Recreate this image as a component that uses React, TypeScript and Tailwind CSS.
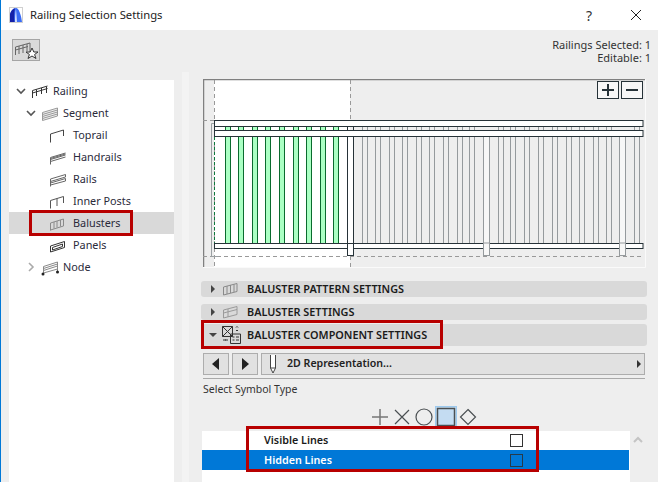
import React from 'react';

const font = { fontFamily: '"Noto Sans", sans-serif' };

const greenBars = [225, 238, 252, 265, 279, 293, 306, 320, 333];
const grayBars = [362, 375, 389, 402, 416, 429, 443, 457, 469, 498, 510, 524, 538, 552, 566, 579, 593, 606, 634];
const posts = [484, 620];

const RailingIcon = ({ kind }: { kind: string }) => (
    <svg width="20" height="20" viewBox="0 0 20 20" fill="none" stroke="#555b5e" strokeWidth="1">
        {kind === 'railing' && <path d="M3.500 17V9.500L18.500 5M3.500 12L18.500 7.500M7.500 15V8.500M12.500 13V7M17.500 12V5.500" stroke="#333" />}
        {kind === 'segment' && <path d="M3.500 9.500L18.500 5V13L3.500 17.500ZM3.500 11.500L18.500 7M3.500 13.500L18.500 9M3.500 15.500L18.500 11" stroke="#999" fill="#eee" />}
        {kind === 'toprail' && <path d="M3.500 17.500V9L16.500 5V11" stroke="#444" />}
        {kind === 'handrails' && <path d="M3.500 17.500V10.500L18.500 6M3.500 12.500L18.500 8M3.500 14.500L18.500 10M3.500 11.500L18.500 7" stroke="#666" />}
        {kind === 'rails' && <path d="M3.500 17.500V10L18.500 5.500V8L3.500 12.500M3.500 14L18.500 9.500V12L3.500 16" stroke="#666" />}
        {kind === 'posts' && <path d="M3.500 17.500V9.500L16.500 5.500V12M10 7.500V15" stroke="#555" />}
        {kind === 'balusters' && <path d="M3.500 17.500V10L16.500 6V13L3.500 17M7 9V15.500M10 8V14.500M13.500 7V13.500" stroke="#8a8a8a" />}
        {kind === 'panels' && <path d="M3.500 17V11L17.500 6.500V12.500ZM5.500 15V12.500L15.500 9V11.500Z" stroke="#333" />}
        {kind === 'node' && (
            <g>
                <path d="M4.500 16V9.500L18.500 5V12L4.500 16M4.500 11.500L18.500 7M4.500 13.500L18.500 9M18.500 12V14" stroke="#888" />
                <circle cx="4" cy="17" r="1.500" fill="#222" stroke="none" />
                <circle cx="18.500" cy="15" r="1.500" fill="#222" stroke="none" />
            </g>
        )}
    </svg>
);

const Chevron = ({ open }: { open: boolean }) => (
    <svg width="10" height="10" viewBox="0 0 10 10" fill="none" stroke={open ? '#555' : '#aaa'} strokeWidth="1.6">
        {open ? <path d="M1 3L5 7L9 3" /> : <path d="M3 1L7 5L3 9" />}
    </svg>
);

const treeRows = [
    { label: 'Railing', kind: 'railing', indent: 'pl-[7px]', chevron: 'open' },
    { label: 'Segment', kind: 'segment', indent: 'pl-[17px]', chevron: 'open' },
    { label: 'Toprail', kind: 'toprail', indent: 'pl-[38px]' },
    { label: 'Handrails', kind: 'handrails', indent: 'pl-[38px]' },
    { label: 'Rails', kind: 'rails', indent: 'pl-[38px]' },
    { label: 'Inner Posts', kind: 'posts', indent: 'pl-[38px]' },
    { label: 'Balusters', kind: 'balusters', indent: 'pl-[38px]', selected: true },
    { label: 'Panels', kind: 'panels', indent: 'pl-[38px]' },
    { label: 'Node', kind: 'node', indent: 'pl-[17px]', chevron: 'closed' },
];

const Railing2D = () => (
    <svg width="443" height="189" viewBox="203 79 443 189" className="block">
        <rect x="203" y="79" width="443" height="189" fill="#eeeeee" />
        <rect x="214" y="80" width="136" height="187" fill="#ffffff" />
        <path d="M203 79.500H645.500V267.500H203" fill="none" stroke="#fafafa" />
        <path d="M645 79.500H204M203.500 79V267" fill="none" stroke="#808080" strokeWidth="1.500" />
        <path d="M214.500 80V267M350.500 80V121M350.500 256V267M203 120.500H214M203 256.500H642" stroke="#999" strokeDasharray="4 3" />
        <path d="M218.500 256.500H211.500V123.500H214" fill="none" stroke="#9aa0a3" />
        <path d="M214.500 137V243" stroke="#0d7a3c" strokeDasharray="3 2" />
        {grayBars.map((x) => (
            <path key={x} d={`M${x + 0.5} 126V243M${x + 5.5} 126V243`} stroke="#959a9d" />
        ))}
        {posts.map((x) => (
            <rect key={x} x={x - 0.500} y="136.500" width="6" height="119" fill="#f7f7f7" stroke="#959a9d" />
        ))}
        {greenBars.map((x) => (
            <rect key={x} x={x + 0.500} y="126.500" width="5" height="117" fill="#aaffc3" stroke="#0a6b2e" />
        ))}
        <rect x="347.500" y="136.500" width="6" height="119" fill="#ffffff" stroke="#263238" />
        <path d="M347.500 127V130M353.500 127V130" stroke="#263238" />
        <path d="M214.500 127V130" stroke="#263238" />
        <rect x="214.500" y="120.500" width="428.500" height="6" fill="#ffffff" stroke="#263238" />
        <rect x="214.500" y="130.500" width="428.500" height="6" fill="#ffffff" stroke="#263238" />
        <rect x="214.500" y="243.500" width="428.500" height="5" fill="#ffffff" stroke="#263238" />
        {posts.map((x) => (
            <rect key={x} x={x - 0.500} y="243" width="6" height="12.500" fill="#f7f7f7" stroke="#959a9d" />
        ))}
        <rect x="347.500" y="243.500" width="6" height="12" fill="#ffffff" stroke="#263238" />
    </svg>
);

const AccordionRow = ({ icon, label, open }: { icon: React.ReactNode; label: string; open?: boolean }) => (
    <div className={`flex items-center bg-[#d9d9d9] rounded-[3px] ${open ? 'h-[22px]' : 'h-[16px]'}`}>
        <span className="w-[21px] flex justify-center pl-[2px]">
            <svg width="8" height="8" viewBox="0 0 8 8" fill="#444">
                {open ? <path d="M0 2H8L4 6Z" /> : <path d="M2 0L6 4L2 8Z" />}
            </svg>
        </span>
        <span className="w-[25px] flex items-center">{icon}</span>
        <span className="text-[10.850px] font-semibold text-[#1b1b1b] whitespace-nowrap">{label}</span>
    </div>
);

const SymbolIcon = ({ children, selected }: { children: React.ReactNode; selected?: boolean }) => (
    <span className={`w-[22px] h-[22px] flex items-center justify-center ${selected ? 'bg-[#c4dcf2] border border-[#9cc9ee]' : ''}`}>
        <svg width="20" height="20" viewBox="0 0 20 20" fill="none" stroke="#4a4f52" strokeWidth="1.200">{children}</svg>
    </span>
);

export default function App() {
    return (
        <div className="w-[658px] h-[482px] overflow-hidden flex flex-col bg-[#eeeeee] border-l border-[#0078d7] text-[#1b1b1b]" style={font}>
            <header className="h-[30px] bg-white flex items-center shrink-0">
                <svg width="14" height="16" viewBox="0 0 14 16" className="ml-[8px]">
                    <rect x="0.500" y="0.500" width="13" height="15" fill="#ffffff" stroke="#d0d0d0" />
                    <path d="M1 15V7C2 4 4 1 7 1C10 1 12 8 13 15Z" fill="#3a6cf5" />
                    <path d="M1 15V7C2 4 3.500 2 6 1.200C5 6 5 11 5.500 15Z" fill="#1420a8" />
                    <path d="M6 15C6 9 6.500 4 7 2C7.300 6 7.800 11 8 15Z" fill="#cfdcff" />
                </svg>
                <span className="ml-[7px] text-[11.250px] text-[#222]">Railing Selection Settings</span>
                <span className="ml-auto mr-[38px] text-[14px] text-[#333]">?</span>
                <svg width="12" height="12" viewBox="0 0 12 12" className="mr-[16px]" fill="none" stroke="#222">
                    <path d="M1 1L11 11M11 1L1 11" />
                </svg>
            </header>

            <div className="h-[49px] shrink-0 flex items-start justify-between">
                <div className="ml-[11px] mt-[9px] w-[28px] h-[22px] bg-[#d9d9d9] border border-[#a5a5a5] flex items-center justify-center">
                    <svg width="26" height="20" viewBox="0 0 26 20" fill="none">
                        <path d="M2.500 15V7L17 3V12M6 6V14M10 5V13M14 4V11M2.500 10L15 6.500" stroke="#666" />
                        <path d="M19 8L20.800 12H25L21.600 14.500L23 18.500L19 16L15 18.500L16.400 14.500L13 12H17.200Z" fill="#fff" stroke="#333" />
                    </svg>
                </div>
                <div className="mr-[7px] mt-[8px] text-right text-[11px] leading-[13px] text-[#333]">
                    <div>Railings Selected: 1</div>
                    <div>Editable: 1</div>
                </div>
            </div>

            <div className="flex-1 flex min-h-0">
                <nav className="ml-[8px] mt-px w-[165px] bg-white shrink-0">
                    {treeRows.map((row) => (
                        <div key={row.label} className={`relative h-[22px] flex items-center ${row.indent} ${row.selected ? 'bg-[#d9d9d9]' : ''}`}>
                            {row.chevron && (
                                <span className="w-[10px] mr-[3px] flex">
                                    <Chevron open={row.chevron === 'open'} />
                                </span>
                            )}
                            <RailingIcon kind={row.kind} />
                            <span className={`${row.chevron ? 'ml-[4px]' : 'ml-[6px]'} text-[10.850px] text-[#2a2a3a]`}>{row.label}</span>
                            {row.selected && (
                                <span className="absolute left-[20px] -top-[2px] w-[104px] h-[26px] border-[3px] border-[#b80000]" />
                            )}
                        </div>
                    ))}
                </nav>

                <div className="ml-[8px] -mt-[7px] w-[7px] bg-[#f3f3f3] shrink-0" />

                <main className="ml-[12px] w-[446px] shrink-0">
                    <div className="relative ml-[2px] w-[443px] h-[189px]">
                        <Railing2D />
                        <div className="absolute top-[2px] right-[3px] flex gap-[2px]">
                            <button className="w-[22px] h-[18px] bg-[#f7f7f7] border border-[#263238] flex items-center justify-center">
                                <svg width="14" height="14" viewBox="0 0 14 14" stroke="#263238" strokeWidth="2"><path d="M1 7H13M7 1V13" /></svg>
                            </button>
                            <button className="w-[22px] h-[18px] bg-[#f7f7f7] border border-[#263238] flex items-center justify-center">
                                <svg width="14" height="14" viewBox="0 0 14 14" stroke="#263238" strokeWidth="2"><path d="M1 7H13" /></svg>
                            </button>
                        </div>
                    </div>

                    <div className="mt-[13px]">
                        <AccordionRow
                            label="BALUSTER PATTERN SETTINGS"
                            icon={<svg width="16" height="14" viewBox="0 0 16 14" fill="none" stroke="#8a8a8a"><path d="M1.500 13V5L15 1.500V9.500L1.500 13M5 4V12M8.500 3V11M12 2.500V10" /></svg>}
                        />
                    </div>
                    <div className="mt-[7px]">
                        <AccordionRow
                            label="BALUSTER SETTINGS"
                            icon={<svg width="16" height="14" viewBox="0 0 16 14" fill="none" stroke="#9a9a9a"><path d="M1.500 13V5L15 1.500V9.500L1.500 13M6 4V12M1.500 8L15 4.500" /></svg>}
                        />
                    </div>
                    <div className="relative mt-[4px]">
                        <AccordionRow
                            open
                            label="BALUSTER COMPONENT SETTINGS"
                            icon={
                                <svg width="19" height="18" viewBox="0 0 19 18" fill="none" stroke="#333">
                                    <path d="M0.500 0.500H10.500V10.500H0.500ZM0.500 0.500L10.500 10.500M10.500 0.500L0.500 10.500M8.500 8H18.500V17.500H8.500ZM10.500 11H12.500M14 11H17M10.500 14H12.500M14 14H17M14 1.500L15 0.500L16 1.500M14 4.500H16M1 14H4M6 14H3" />
                                </svg>
                            }
                        />
                        <span className="absolute left-0 -top-[4px] w-[242px] h-[29px] border-[3px] border-[#b80000]" />
                    </div>

                    <div className="mt-[7px] mx-[2px] flex h-[22px] gap-[3px]">
                        <button className="w-[26px] bg-[#e1e1e1] border border-[#adadad] flex items-center justify-center">
                            <svg width="8" height="12" viewBox="0 0 8 12" fill="#222"><path d="M7 0V12L0 6Z" /></svg>
                        </button>
                        <button className="w-[26px] bg-[#e1e1e1] border border-[#adadad] flex items-center justify-center">
                            <svg width="8" height="12" viewBox="0 0 8 12" fill="#222"><path d="M1 0V12L8 6Z" /></svg>
                        </button>
                        <div className="flex-1 bg-[#e1e1e1] border border-[#adadad] flex items-center pr-[1px]">
                            <svg width="8" height="19" viewBox="0 0 8 19" className="ml-[7px]" fill="#fff" stroke="#444">
                                <path d="M1.500 0V13L4 18L6.500 13V0M1.500 13H6.500" />
                            </svg>
                            <span className="ml-[10px] text-[10.600px] font-semibold text-[#222]">2D Representation...</span>
                            <svg width="6" height="8" viewBox="0 0 6 8" fill="#333" className="ml-auto mr-[1px]"><path d="M1 0V8L5 4Z" /></svg>
                        </div>
                    </div>
                    <div className="mt-[3px] mx-[2px] h-px bg-[#a9a9a9]" />

                    <div className="mt-[3px] ml-[2px] text-[10.500px] leading-[14px] text-[#333]">Select Symbol Type</div>

                    <div className="mt-[10px] pl-[168px] flex h-[22px]">
                        <SymbolIcon><path d="M10 2V18M2 10H18" stroke="#777" strokeWidth="1.500" /></SymbolIcon>
                        <SymbolIcon><path d="M3 3L17 17M17 3L3 17" /></SymbolIcon>
                        <SymbolIcon><circle cx="10" cy="10" r="8" /></SymbolIcon>
                        <SymbolIcon selected><rect x="1.500" y="1.500" width="17" height="17" strokeWidth="1.500" /></SymbolIcon>
                        <SymbolIcon><path d="M10 2.500L17.500 10L10 17.500L2.500 10Z" /></SymbolIcon>
                    </div>

                    <div className="relative mt-[3px] ml-px flex">
                        <div className="w-[428px] h-[52px] bg-white">
                            <div className="h-[19px] flex items-center pl-[62px] text-[10.750px] font-semibold text-[#1b1b1b]">
                                Visible Lines
                                <span className="ml-auto mr-[107px] w-[13px] h-[13px] border border-[#333] bg-white" />
                            </div>
                            <div className="h-[20px] mr-px bg-[#0078d7] flex items-center pl-[62px] text-[10.750px] font-semibold text-white">
                                Hidden Lines
                                <span className="ml-auto mr-[106px] w-[13px] h-[13px] border border-[#263a4a]" />
                            </div>
                        </div>
                        <svg width="10" height="8" viewBox="0 0 10 8" className="ml-[3px] mt-[5px]" fill="none" stroke="#c4c4c4" strokeWidth="2">
                            <path d="M1 6L5 2L9 6" />
                        </svg>
                        <span className="absolute left-[44px] -top-[5px] w-[293px] h-[46px] border-[3px] border-[#b80000]" />
                    </div>
                </main>
            </div>
        </div>
    );
}
